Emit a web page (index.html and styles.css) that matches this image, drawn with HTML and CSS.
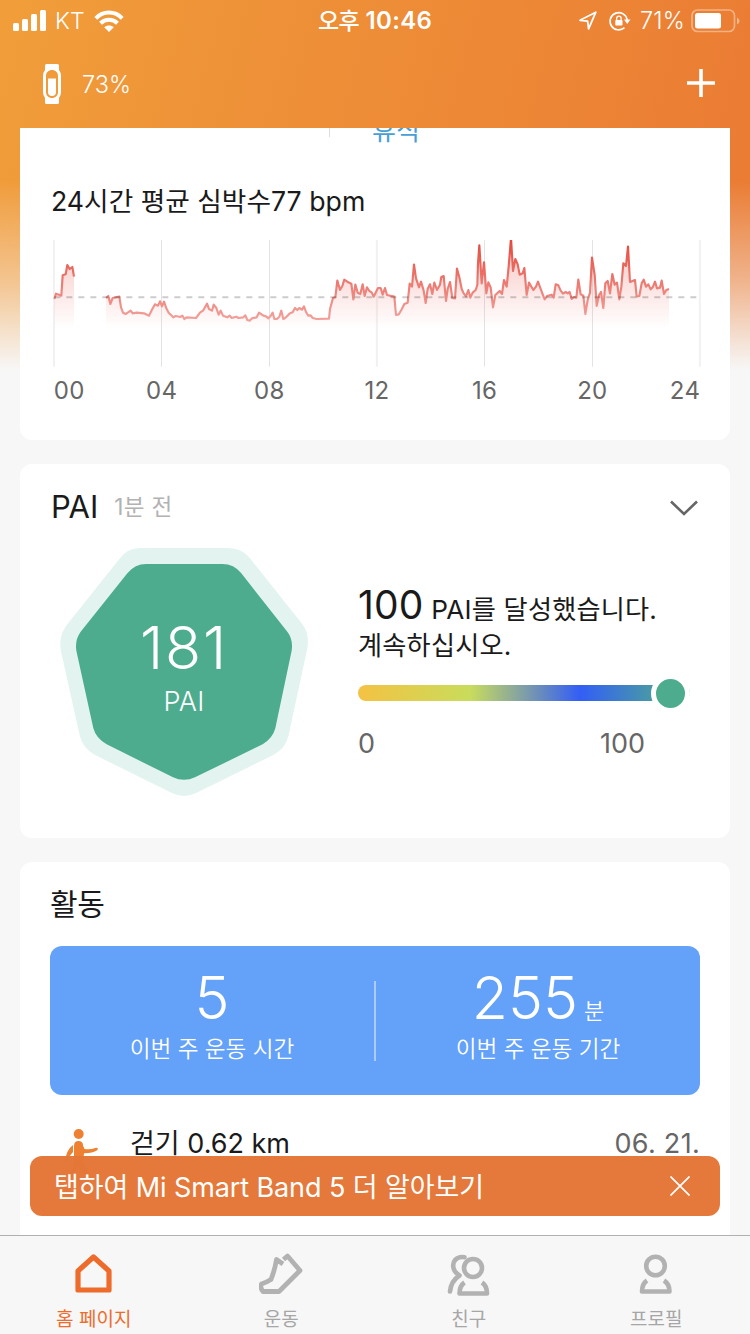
FILE: index.html
```html
<!DOCTYPE html>
<html lang="ko">
<head>
<meta charset="utf-8">
<title>홈 페이지</title>
<link rel="stylesheet" href="styles.css">
</head>
<body>
<div class="app">
  <div class="status">
    <div class="status-left">
      <svg class="signal" viewBox="0 0 33 21" width="33" height="21"><g fill="#fff"><rect x="0" y="13" width="6" height="8" rx="1.5"/><rect x="9" y="9" width="6" height="12" rx="1.5"/><rect x="18" y="4" width="6" height="17" rx="1.5"/><rect x="27" y="0" width="6" height="21" rx="1.5"/></g></svg>
      <span class="carrier">KT</span>
      <svg class="wifi" viewBox="0 0 30 22" width="30" height="22"><g fill="none" stroke="#fff" stroke-width="4"><path d="M1.8 8.3C9.2 .6 20.800 .6 28.200 8.300"/><path d="M6.500 13.300C11.300 8.600 18.700 8.600 23.500 13.300"/></g><path d="M10.200 17.300C13 14.900 17 14.900 19.800 17.300L15 22Z" fill="#fff"/></svg>
    </div>
    <div class="clock"><span class="ampm">오후</span> 10:46</div>
    <div class="status-right">
      <svg viewBox="0 0 18 19" width="18" height="19"><path d="M1 9.300L16.800 1.200 9.600 17.800 8.600 10.200Z" fill="none" stroke="#fff" stroke-width="1.800" stroke-linejoin="round"/></svg>
      <svg class="lock" viewBox="0 0 22 20" width="22" height="20"><path d="M15.500 16.600A8.600 8.600 0 1 1 18.200 9" fill="none" stroke="#fff" stroke-width="1.700"/><path d="M15 8.600H21.500L18.200 13Z" fill="#fff"/><rect x="6.300" y="9" width="7.200" height="5.600" rx=".8" fill="#fff"/><path d="M7.700 9V7.300a2.200 2.200 0 0 1 4.400 0V9" fill="none" stroke="#fff" stroke-width="1.300"/></svg>
      <span class="percent">71%</span>
      <svg class="battery" viewBox="0 0 49 24" width="49" height="24"><rect x="1" y="1" width="42.500" height="21.500" rx="5.500" fill="none" stroke="#fff" stroke-opacity=".4" stroke-width="1.700"/><rect x="4" y="4" width="26" height="15.500" rx="2.500" fill="#fff"/><path d="M46 8.500Q48.600 10 48.600 12T46 15.500Z" fill="#fff" fill-opacity=".45"/></svg>
    </div>
  </div>

  <header class="header">
    <svg viewBox="0 0 18 40" width="18" height="40"><path d="M3.500 0h11a1.500 1.500 0 0 1 1.500 1.500V6q2 2.500 2 6v16q0 3.500-2 6v4.500a1.500 1.500 0 0 1-1.500 1.500h-11A1.500 1.500 0 0 1 2 38.500V34q-2-2.500-2-6V12q0-3.500 2-6V1.500A1.500 1.500 0 0 1 3.500 0ZM9 6C5.500 6 3 8.500 3 12v16c0 3.500 2.500 6 6 6s6-2.500 6-6V12c0-3.500-2.500-6-6-6Z" fill="#fff" fill-rule="evenodd"/><path d="M5 14.500h8V28q0 4-4 4t-4-4Z" fill="#fff"/></svg>
    <span class="band-level">73%</span>
    <svg class="plus" viewBox="0 0 28 28" width="28" height="28"><path d="M14 0V28M0 14H28" stroke="#fff" stroke-width="3.600"/></svg>
  </header>

  <main class="feed">
    <section class="card heart">
      <div class="tabs-row"><span class="tab-rule"></span><span class="tab-name">휴식</span></div>
      <h2 class="heart-title">24시간 평균 심박수<span class="latin">77 bpm</span></h2>
      <svg class="chart" viewBox="150 30 1962 390" width="654" height="130">
        <defs>
          <linearGradient id="line" gradientUnits="userSpaceOnUse" x1="0" y1="30" x2="0" y2="270"><stop offset="0" stop-color="#e54a3d"/><stop offset=".6" stop-color="#ed8078"/><stop offset="1" stop-color="#f2a09a"/></linearGradient>
          <linearGradient id="area" gradientUnits="userSpaceOnUse" x1="0" y1="30" x2="0" y2="296"><stop offset="0" stop-color="#e54a3d" stop-opacity=".32"/><stop offset="1" stop-color="#e54a3d" stop-opacity="0"/></linearGradient>
        </defs>
        <path d="M162 30V410M1130.500 30V410M2099.500 30V410" stroke="#f1f1f1" stroke-width="6"/>
        <path d="M484.500 30V410M808.500 30V410M1453.500 30V410M1777.500 30V410" stroke="#e3e3e3" stroke-width="3"/>
        <g fill="url(#area)">
          <path d="M163 296V207L168 191 177 194 184 197 188 136 197 133 202 105 209 117 217 111 222 140V296Z"/>
          <path d="M318 296V204L325 198 331 222 338 204 358 200 363 232 369 248 377 252 383 248 392 242 398 250 410 248 432 250 438 253 447 257 457 237 465 223 474 227 480 214 486 229 492 215 499 235 506 248 520 262 527 258 541 261 547 257 553 267 560 262 588 264 600 248 609 242 621 221 627 237 636 242 641 224 649 234 656 254 662 242 669 257 682 262 689 257 695 264 709 260 715 264 730 262 736 256 742 270 749 272 756 265 770 262 777 248 790 257 798 259 805 265 812 258 818 248 823 267 831 267 838 260 844 242 850 267 858 262 870 250 878 247 885 234 892 240 898 234 906 239 912 229 918 246 925 257 932 256 938 264 950 267 987 266 990 237 999 204 1006 202 1012 152 1020 180 1027 168 1033 149 1045 157 1054 161 1060 208 1066 164 1073 188 1081 192 1088 163 1094 198 1101 172 1108 183 1115 187 1121 200 1134 174 1142 174 1148 194 1155 174 1161 195 1183 200 1188 255 1196 253 1204 240 1213 222 1223 218 1229 161 1236 170 1242 104 1248 145 1257 172 1263 155 1271 182 1277 219 1283 177 1290 163 1297 192 1303 158 1311 180 1320 164 1324 141 1331 138 1338 213 1343 177 1350 156 1357 204 1365 205 1371 116 1378 142 1385 177 1391 190 1398 199 1405 180 1411 203 1418 188 1427 180 1432 165 1434 100 1438 46 1445 160 1452 97 1459 190 1465 157 1472 172 1479 232 1486 195 1499 183 1506 192 1512 150 1520 170 1526 110 1533 25 1539 123 1546 87 1553 103 1559 134 1568 130 1573 114 1580 195 1587 158 1600 180 1608 170 1614 155 1621 174 1627 190 1634 208 1641 198 1655 194 1661 203 1667 163 1675 166 1682 182 1689 191 1697 186 1703 190 1709 186 1715 207 1722 201 1729 203 1735 149 1742 193 1750 197 1756 252 1763 210 1770 188 1776 83 1784 135 1790 228 1797 195 1803 186 1810 234 1816 160 1823 153 1830 190 1837 132 1844 164 1851 158 1858 208 1864 170 1870 100 1878 108 1884 50 1890 156 1905 150 1910 199 1918 198 1925 160 1931 149 1938 170 1945 163 1952 178 1958 172 1965 155 1971 175 1980 173 1985 152 1992 192 1999 180 2007 177V296Z"/>
        </g>
        <g fill="none" stroke="url(#line)" stroke-width="6.500" stroke-linejoin="round">
          <path d="M163 207L168 191 177 194 184 197 188 136 197 133 202 105 209 117 217 111 222 140"/>
          <path d="M318 204L325 198 331 222 338 204 358 200 363 232 369 248 377 252 383 248 392 242 398 250 410 248 432 250 438 253 447 257 457 237 465 223 474 227 480 214 486 229 492 215 499 235 506 248 520 262 527 258 541 261 547 257 553 267 560 262 588 264 600 248 609 242 621 221 627 237 636 242 641 224 649 234 656 254 662 242 669 257 682 262 689 257 695 264 709 260 715 264 730 262 736 256 742 270 749 272 756 265 770 262 777 248 790 257 798 259 805 265 812 258 818 248 823 267 831 267 838 260 844 242 850 267 858 262 870 250 878 247 885 234 892 240 898 234 906 239 912 229 918 246 925 257 932 256 938 264 950 267 987 266 990 237 999 204 1006 202 1012 152 1020 180 1027 168 1033 149 1045 157 1054 161 1060 208 1066 164 1073 188 1081 192 1088 163 1094 198 1101 172 1108 183 1115 187 1121 200 1134 174 1142 174 1148 194 1155 174 1161 195 1183 200 1188 255 1196 253 1204 240 1213 222 1223 218 1229 161 1236 170 1242 104 1248 145 1257 172 1263 155 1271 182 1277 219 1283 177 1290 163 1297 192 1303 158 1311 180 1320 164 1324 141 1331 138 1338 213 1343 177 1350 156 1357 204 1365 205 1371 116 1378 142 1385 177 1391 190 1398 199 1405 180 1411 203 1418 188 1427 180 1432 165 1434 100 1438 46 1445 160 1452 97 1459 190 1465 157 1472 172 1479 232 1486 195 1499 183 1506 192 1512 150 1520 170 1526 110 1533 25 1539 123 1546 87 1553 103 1559 134 1568 130 1573 114 1580 195 1587 158 1600 180 1608 170 1614 155 1621 174 1627 190 1634 208 1641 198 1655 194 1661 203 1667 163 1675 166 1682 182 1689 191 1697 186 1703 190 1709 186 1715 207 1722 201 1729 203 1735 149 1742 193 1750 197 1756 252 1763 210 1770 188 1776 83 1784 135 1790 228 1797 195 1803 186 1810 234 1816 160 1823 153 1830 190 1837 132 1844 164 1851 158 1858 208 1864 170 1870 100 1878 108 1884 50 1890 156 1905 150 1910 199 1918 198 1925 160 1931 149 1938 170 1945 163 1952 178 1958 172 1965 155 1971 175 1980 173 1985 152 1992 192 1999 180 2007 177"/>
        </g>
        <path d="M163 202H2090" stroke="#000" stroke-opacity=".2" stroke-width="6" stroke-dasharray="18 18"/>
      </svg>
      <div class="hours"><span>00</span><span>04</span><span>08</span><span>12</span><span>16</span><span>20</span><span>24</span></div>
    </section>

    <section class="card pai">
      <div class="pai-head">
        <h2 class="pai-title">PAI</h2><span class="ago">1분 전</span>
        <svg class="chevron" viewBox="0 0 28 16" width="28" height="16"><path d="M1 1.500L14 14 27 1.500" fill="none" stroke="#666" stroke-width="2.600"/></svg>
      </div>
      <div class="pai-body">
        <div class="badge">
          <svg class="badge-shape" viewBox="60 204 744 744" width="248" height="248"><path d="M300 204H565Q605 204 630 235L785 430Q810 460 802 505L746 765Q738 805 700 825L470 938Q432 958 394 938L165 825Q130 805 120 770L62 510Q55 470 80 435L238 237Q262 204 300 204Z" fill="#e3f4f0"/><path d="M318 252H547Q582 252 604 280L742 455Q760 478 755 512L706 745Q698 775 668 793L465 892Q432 907 399 892L200 793Q168 775 160 745L109 512Q104 480 122 455L262 280Q285 252 318 252Z" fill="#4eac8e"/></svg>
          <div class="badge-text"><span class="score">181</span><span class="unit">PAI</span></div>
        </div>
        <div class="goal">
          <p class="goal-text"><span class="goal-num">100</span> <span class="latin">PAI</span>를 달성했습니다.<br>계속하십시오.</p>
          <div class="meter"><span class="knob"></span></div>
          <div class="scale"><span>0</span><span>100</span></div>
        </div>
      </div>
    </section>

    <section class="card activity">
      <h2 class="activity-title">활동</h2>
      <div class="summary">
        <div class="stat"><div class="value">5</div><div class="caption">이번 주 운동 시간</div></div>
        <span class="rule"></span>
        <div class="stat"><div class="value">255<span class="minutes">분</span></div><div class="caption">이번 주 운동 기간</div></div>
      </div>
      <div class="workout">
        <svg viewBox="0 0 34 54" width="34" height="54"><g fill="#ee8032"><circle cx="13.700" cy="5" r="5"/><path d="M9 17Q9 12 13.500 12T18 16.500L19.500 20Q25 21 31 18.800Q33.500 18.500 32.500 21Q27 24.500 19 24.300L18 34 24 43 23 52 19 44 12 38 6 51 3 50 9 35Z"/><path d="M8 16V23Q3 28 1 34L0 33Q1 21 8 16Z"/></g></svg>
        <span class="workout-name">걷기 <span class="latin">0.62 km</span></span>
        <span class="workout-date">06. 21.</span>
      </div>
    </section>

    <div class="banner">
      <span class="banner-text">탭하여 <span class="latin">Mi Smart Band 5</span> 더 알아보기</span>
      <svg viewBox="0 0 20 20" width="20" height="20"><path d="M.5.5L19.500 19.500M19.500.5L.5 19.500" stroke="#fff" stroke-width="1.700"/></svg>
    </div>
  </main>

  <nav class="tabbar">
    <a class="tab active">
      <svg viewBox="1 0 44 44" width="44" height="44"><path d="M7 18L22.500 4 38 18V37H7Z" fill="none" stroke="#ee6c2b" stroke-width="5.200" stroke-linejoin="round"/></svg>
      <span>홈 페이지</span>
    </a>
    <a class="tab">
      <svg viewBox="0 0 44 44" width="44" height="44"><path d="M24 11L17.500 6.500Q16 16 12 26.500Q8 29 2.500 31Q.500 34 4 38.500H20L41 17.500 28.500 3 24.500 6.500" fill="none" stroke="#b2b2b2" stroke-width="4.800" stroke-linejoin="round"/></svg>
      <span>운동</span>
    </a>
    <a class="tab">
      <svg viewBox="1 0 44 44" width="44" height="44"><g fill="none" stroke="#b2b2b2" stroke-width="4.600" stroke-linejoin="round"><circle cx="27" cy="15" r="9"/><path d="M18.500 29.500Q13.500 33 13.500 40.500H41Q41 33 36 29.500"/><path d="M18.500 4.200C10 3 6 9 7.500 15Q8.500 19.500 13.500 22.500Q5 28 4 38.500" stroke-linecap="round"/></g></svg>
      <span>친구</span>
    </a>
    <a class="tab">
      <svg viewBox="0 0 44 44" width="44" height="44"><g fill="none" stroke="#b2b2b2" stroke-width="4.600" stroke-linejoin="round"><circle cx="21.500" cy="13" r="9.300"/><path d="M13 27.500Q8 31 8 38.500H35.500Q35.500 31 30 27.500"/></g></svg>
      <span>프로필</span>
    </a>
  </nav>
</div>
</body>
</html>
```
FILE: styles.css
```css
* { box-sizing: border-box; }
body {
  margin: 0;
  font-family: Inter, "Noto Sans CJK KR", sans-serif;
  color: #1a1a1a;
}
h2, p { margin: 0; font-weight: 400; }
svg { display: block; flex: none; }
span { white-space: nowrap; }

.app {
  width: 750px;
  height: 1334px;
  display: flex;
  flex-direction: column;
  overflow: hidden;
  background:
    linear-gradient(180deg, rgba(247,247,247,0) 180px, rgba(247,247,247,.45) 280px, #f7f7f7 370px),
    linear-gradient(105deg, #f19e3a 0, #ee9138 270px, #ed8836 500px, #ea7b33 780px);
}

.status {
  height: 40px;
  display: grid;
  grid-template-columns: 1fr auto 1fr;
  align-items: center;
  color: #fff;
  line-height: 40px;
}
.status-left { display: flex; align-items: center; padding-left: 13px; }
.carrier { font-size: 23px; font-weight: 350; margin: 1px 9px 0 9px; letter-spacing: .2px; }
.clock { font-size: 24px; font-weight: 600; letter-spacing: .3px; white-space: nowrap; padding-top: 1px; }
.ampm { font-size: 23px; font-weight: 500; letter-spacing: -.5px; }
.status-right { display: flex; align-items: center; justify-content: flex-end; padding-right: 10px; }
.lock { margin: 0 0 0 12px; }
.percent { font-size: 23.5px; font-weight: 350; margin: 1px 6px 0 9px; letter-spacing: .2px; }

.header {
  height: 88px;
  display: flex;
  align-items: center;
  padding: 0 35px 0 43px;
  color: #fff;
}
.band-level { font-size: 23.5px; font-weight: 350; margin: 1px 0 0 21px; }
.plus { margin: -2px 0 0 auto; }

.feed {
  position: relative;
  height: 1107px;
  padding: 0 20px;
  display: flex;
  flex-direction: column;
  gap: 24px;
  overflow: hidden;
}
.card { flex: none; background: #fff; border-radius: 12px; overflow: hidden; }

.heart { height: 312px; border-radius: 0 0 12px 12px; }
.tabs-row { display: flex; align-items: flex-end; height: 18px; }
.tab-rule { width: 1px; height: 10px; margin: 0 42px 9px 309px; background: #ddd; }
.tab-name { color: #489fd8; font-size: 26px; line-height: 30px; }
.heart-title { padding: 34px 0 0 31px; height: 94px; font-size: 26.7px; line-height: 42px; white-space: nowrap; }
.chart { margin-left: 30px; }
.hours {
  display: grid;
  grid-template-columns: 54px repeat(5, 107.7px) 54px;
  justify-items: center;
  justify-content: center;
  padding-top: 6px;
  margin-left: 3.5px;
  width: 707px;
  font-size: 24px;
  line-height: 30px;
  letter-spacing: .3px;
  color: #666;
}
.hours span:first-child { justify-self: start; }
.hours span:last-child { justify-self: end; }

.pai { height: 374px; padding: 0 31px; }
.pai-head { display: flex; align-items: center; height: 84px; }
.pai-title { font-size: 31px; }
.ago { font-size: 22.5px; color: #b2b2b2; margin: -2px 0 0 16px; letter-spacing: .4px; }
.chevron { margin: 3px 1px 0 auto; }
.pai-body { display: flex; margin-left: 9px; }
.badge { display: grid; width: 248px; height: 248px; }
.badge-shape, .badge-text { grid-area: 1 / 1; }
.badge-text { z-index: 1; display: flex; flex-direction: column; align-items: center; color: #fff; padding-top: 64px; }
.score { font-size: 59px; line-height: 72px; font-weight: 350; letter-spacing: 1.8px; }
.unit { font-size: 27px; line-height: 36px; font-weight: 350; letter-spacing: .3px; }
.goal { margin-left: 50px; width: 332px; padding-top: 39px; }
.goal-text { font-size: 26.2px; line-height: 36px; white-space: nowrap; letter-spacing: .2px; }
.goal-num { font-size: 39px; }
.meter {
  width: 332px;
  height: 16px;
  margin-top: 21px;
  display: flex;
  align-items: center;
  justify-content: flex-end;
  border-radius: 8px;
  background: linear-gradient(90deg, #f4c243 0, #c9dc5c 112px, #335ef5 222px, #4eac8e 318px);
}
.knob { width: 39px; height: 39px; flex: none; margin-right: .5px; border: 5.5px solid #fff; border-radius: 50%; background: #4eac8e; }
.scale { display: flex; justify-content: space-between; padding-right: 45px; margin-top: 25px; font-size: 27px; line-height: 36px; color: #666; }

.activity { height: 420px; padding: 0 30px; }
.activity-title { font-size: 30px; line-height: 84px; height: 84px; letter-spacing: -.3px; }
.summary { display: flex; align-items: center; height: 149px; border-radius: 12px; background: #64a1f9; color: #fff; font-weight: 350; }
.stat { flex: 1; padding-bottom: 14px; display: flex; flex-direction: column; align-items: center; }
.value { display: flex; align-items: baseline; height: 72px; font-size: 59px; line-height: 72px; white-space: nowrap; }
.minutes { font-size: 22px; line-height: 32px; margin-left: 6px; }
.caption { font-size: 22.6px; line-height: 32px; white-space: nowrap; margin-top: -1px; }
.rule { width: 2px; height: 80px; background: rgba(255,255,255,.45); }
.workout { display: flex; align-items: flex-start; padding: 34px 0 0 15px; line-height: 30px; font-size: 27px; }
.workout-name { margin-left: 31px; }
.workout-date { margin-left: auto; color: #666; letter-spacing: .3px; }

.banner {
  position: absolute;
  left: 30px;
  right: 30px;
  bottom: 19px;
  height: 60px;
  display: flex;
  align-items: center;
  justify-content: space-between;
  padding: 0 30px 0 24px;
  border-radius: 12px;
  background: rgba(227,118,55,.98);
  color: #fff;
}
.banner-text { font-size: 27px; letter-spacing: -.1px; margin-top: -2px; }

.tabbar {
  height: 99px;
  border-top: 1px solid #b0b0b0;
  background: #f7f7f7;
  display: grid;
  grid-template-columns: repeat(4, 187.5px);
}
.tab { display: flex; flex-direction: column; align-items: center; padding-top: 17px; font-size: 19px; line-height: 26px; color: #a6a6a6; gap: 10px; }
.active { color: #ee6c2b; }
```
